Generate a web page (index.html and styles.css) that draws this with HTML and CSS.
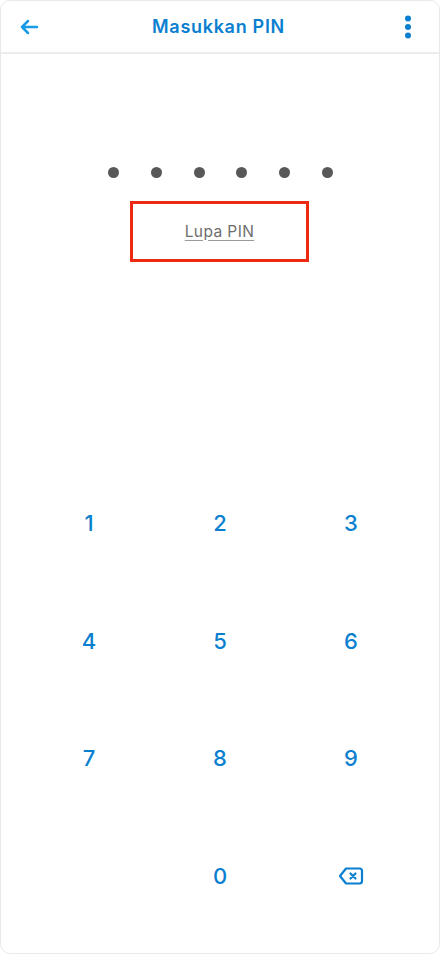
FILE: index.html
```html
<!DOCTYPE html>
<html lang="id">
<head>
<meta charset="utf-8">
<title>Masukkan PIN</title>
<link rel="stylesheet" href="styles.css">
</head>
<body>
<div class="frame">
  <header class="topbar">
    <button class="icon-btn back" aria-label="Kembali">
      <svg width="20" height="20" viewBox="0 0 20 20"><path d="M18 10H3M9 4L3 10l6 6" fill="none" stroke="#1a9be6" stroke-width="2.5" stroke-linecap="round" stroke-linejoin="round"/></svg>
    </button>
    <h1 class="title">Masukkan PIN</h1>
    <button class="icon-btn more" aria-label="Menu">
      <svg width="8" height="24" viewBox="0 0 8 24"><circle cx="4" cy="3.5" r="3" fill="#0a7fd0"/><circle cx="4" cy="12" r="3" fill="#0a7fd0"/><circle cx="4" cy="20.5" r="3" fill="#0a7fd0"/></svg>
    </button>
  </header>
  <main class="content">
    <div class="pin-dots">
      <span class="dot"></span><span class="dot"></span><span class="dot"></span><span class="dot"></span><span class="dot"></span><span class="dot"></span>
    </div>
    <div class="forgot-box">
      <a class="forgot" href="#">Lupa PIN</a>
    </div>
    <div class="keypad">
      <button class="key">1</button>
      <button class="key">2</button>
      <button class="key">3</button>
      <button class="key">4</button>
      <button class="key">5</button>
      <button class="key">6</button>
      <button class="key">7</button>
      <button class="key">8</button>
      <button class="key">9</button>
      <span class="key empty"></span>
      <button class="key">0</button>
      <button class="key" aria-label="Hapus">
        <svg width="26" height="20" viewBox="0 0 26 20"><path d="M8 2.5h13.5a2.5 2.5 0 0 1 2.5 2.5v10a2.5 2.5 0 0 1-2.5 2.5H8L2 10z" fill="none" stroke="#0a7fd0" stroke-width="2.2" stroke-linejoin="round"/><path d="M12.5 7.5l5 5M17.5 7.5l-5 5" stroke="#0a7fd0" stroke-width="2.2" stroke-linecap="round"/></svg>
      </button>
    </div>
  </main>
</div>
</body>
</html>
```
FILE: styles.css
```css
* { box-sizing: border-box; }
html, body { margin: 0; padding: 0; background: #fff; }
body { font-family: "Inter", "Noto Sans", sans-serif; }
.frame {
  width: 440px;
  height: 954px;
  border: 1px solid #e9e9e9;
  border-radius: 10px;
  display: flex;
  flex-direction: column;
  overflow: hidden;
}
.topbar {
  height: 53px;
  flex: none;
  display: flex;
  align-items: center;
  justify-content: space-between;
  padding: 0 19px 0 16px;
  border-bottom: 2px solid #ececec;
}
.icon-btn {
  background: none;
  border: 0;
  padding: 0;
  display: flex;
  align-items: center;
  justify-content: center;
  width: 24px;
  height: 24px;
}
.title {
  margin: 0;
  font-size: 18px;
  font-weight: 600;
  color: #0a7fd0;
  letter-spacing: 0.7px;
}
.content {
  flex: 1;
  display: flex;
  flex-direction: column;
  align-items: center;
  padding-top: 113px;
}
.pin-dots {
  display: flex;
  gap: 31.8px;
  margin-left: 1px;
}
.dot {
  width: 11px;
  height: 11px;
  border-radius: 50%;
  background: #585858;
}
.forgot-box {
  margin-top: 23px;
  width: 179px;
  height: 61px;
  border: 3px solid #ea2a12;
  display: flex;
  align-items: center;
  justify-content: center;
  margin-right: 1px;
}
.forgot {
  font-size: 15.5px;
  color: #6d6d6d;
  text-decoration: underline;
  text-decoration-color: #9a9a9a;
  text-underline-offset: 3px;
  letter-spacing: 0.4px;
  margin-top: -1px;
}
.keypad {
  margin-top: 202px;
  width: 393px;
  display: grid;
  grid-template-columns: repeat(3, 131px);
  grid-auto-rows: 117.7px;
  margin-left: 0;
}
.key {
  background: none;
  border: 0;
  padding: 0;
  display: flex;
  align-items: center;
  justify-content: center;
  font-family: "Inter", "Noto Sans", sans-serif;
  font-size: 22px;
  font-weight: 500;
  color: #0b7fcf;
}
```
